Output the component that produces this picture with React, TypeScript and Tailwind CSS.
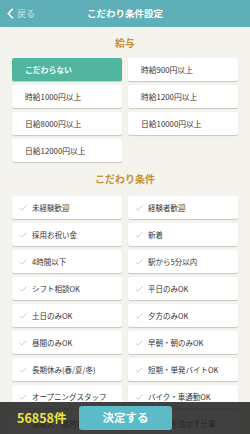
import React from "react";

const salary = [
  "こだわらない",
  "時給900円以上",
  "時給1000円以上",
  "時給1200円以上",
  "日給8000円以上",
  "日給10000円以上",
  "日給12000円以上",
];

const conds = [
  "未経験歓迎",
  "経験者歓迎",
  "採用お祝い金",
  "新着",
  "4時間以下",
  "駅から5分以内",
  "シフト相談OK",
  "平日のみOK",
  "土日のみOK",
  "夕方のみOK",
  "昼間のみOK",
  "早朝・朝のみOK",
  "長期休み(春/夏/冬)",
  "短期・単発バイトOK",
  "オープニングスタッフ",
  "バイク・車通勤OK",
  "高収入・高時給",
  "スキルを活かす仕事",
];

function Check() {
  return (
    <svg width="8" height="6" viewBox="0 0 8 6" className="shrink-0">
      <path d="M0.6 3.2 L2.8 5.2 L7.4 0.6" fill="none" stroke="#c4c4c4" strokeWidth="0.9" />
    </svg>
  );
}

export default function App() {
  return (
    <div
      className="relative w-[250px] h-[434px] overflow-hidden bg-[#f4f3ee]"
      style={{ fontFamily: '"Noto Sans CJK JP", "Noto Sans", sans-serif' }}
    >
      <div className="h-[27px] bg-[#5eafb7] flex items-center relative">
        <div className="absolute left-[7px] top-0 h-full flex items-center gap-[3px]">
          <svg width="7" height="11" viewBox="0 0 7 11">
            <path d="M5.8 0.8 L1.3 5.5 L5.8 10.2" fill="none" stroke="#ffffff" strokeWidth="1.6" />
          </svg>
          <span className="text-[9px] text-[#c9e6ea] leading-none">戻る</span>
        </div>
        <div className="w-full text-center text-white font-bold text-[9.5px] leading-none">
          こだわり条件設定
        </div>
      </div>

      <div className="h-[31px] flex items-center justify-center text-[10px] font-bold text-[#c8912e] leading-none">
        給与
      </div>
      <div className="grid grid-cols-2 gap-x-[6px] gap-y-[4px] px-[12px]">
        {salary.map((s, i) => (
          <div
            key={s}
            className={
              "h-[23px] rounded-[2px] flex items-center pl-[13px] text-[7.8px] leading-none shadow-[0_1px_1px_rgba(0,0,0,0.18)] " +
              (i === 0 ? "bg-[#52b59e] text-white font-bold" : "bg-white text-[#333]")
            }
          >
            {s}
          </div>
        ))}
      </div>

      <div className="h-[34px] flex items-center justify-center text-[10px] font-bold text-[#c8912e] leading-none">
        こだわり条件
      </div>
      <div className="grid grid-cols-2 gap-x-[6px] gap-y-[4px] px-[12px]">
        {conds.map((s) => (
          <div
            key={s}
            className="h-[23px] rounded-[2px] bg-white flex items-center pl-[7px] gap-[5px] text-[7.5px] text-[#333] leading-none shadow-[0_1px_1px_rgba(0,0,0,0.18)]"
          >
            <Check />
            <span>{s}</span>
          </div>
        ))}
      </div>

      <div className="absolute left-0 bottom-0 w-full h-[32px] bg-[rgba(38,38,38,0.88)] flex items-center">
        <div className="w-[79px] pl-[17px] text-[12.5px] font-bold text-[#f2e63a] leading-none">
          56858件
        </div>
        <div className="w-[93px] h-[24px] rounded-[3px] bg-[#5bbcc8] flex items-center justify-center text-white font-bold text-[11.5px] leading-none">
          決定する
        </div>
      </div>
    </div>
  );
}
